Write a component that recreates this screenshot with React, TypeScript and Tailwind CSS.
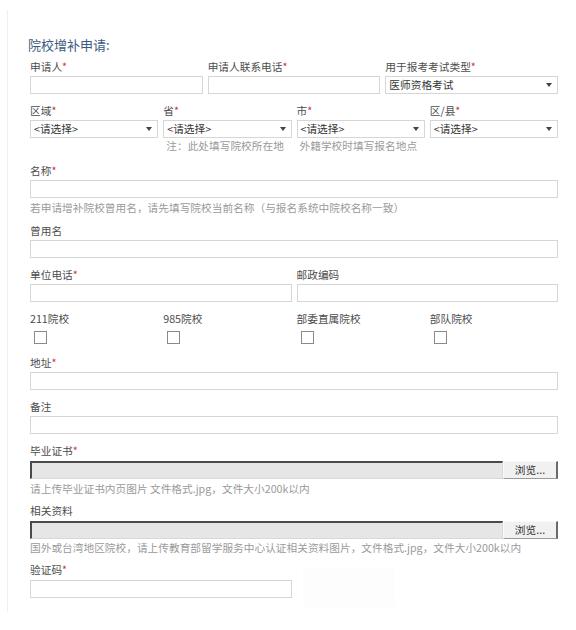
import React from "react";

const font = {
  fontFamily: '"Microsoft YaHei", "Noto Sans CJK SC", "Noto Sans", sans-serif',
};

function Label({ text, req }: { text: string; req?: boolean }) {
  return (
    <div className="h-[14px] leading-[14px] text-[10.7px] text-[#4d4d4d] whitespace-nowrap">
      {text}
      {req && <span className="text-[#d0342c]">*</span>}
    </div>
  );
}

function TextBox({ className = "" }: { className?: string }) {
  return (
    <div className={`h-[18px] border border-[#d6d6d6] bg-white ${className}`} />
  );
}

function SelectBox({ value }: { value: string }) {
  return (
    <div className="mt-[2px] h-[18px] border border-[#d6d6d6] bg-white flex items-center justify-between pl-[3px] pr-[5px]">
      <span className="text-[10.7px] leading-[14px] text-[#333]">{value}</span>
      <span className="w-0 h-0 border-l-[3.5px] border-r-[3.5px] border-t-[4px] border-l-transparent border-r-transparent border-t-[#444]" />
    </div>
  );
}

function Hint({ text, className = "" }: { text: string; className?: string }) {
  return (
    <div
      className={`h-[14px] leading-[14px] text-[10.7px] text-[#9a9a9a] whitespace-nowrap ${className}`}
    >
      {text}
    </div>
  );
}

function FileBox() {
  return (
    <div className="mt-[3px] h-[18px] flex">
      <div className="flex-1 bg-[#e6e6e6] border-t-2 border-l-2 border-t-[#4a4a4a] border-l-[#4a4a4a] border-b border-r border-b-[#d8d8d8] border-r-[#d8d8d8]" />
      <div className="w-[55px] bg-[#f1f1f1] border-t border-l border-t-[#fafafa] border-l-[#fafafa] border-r-2 border-b border-r-[#6a6a6a] border-b-[#9a9a9a] flex items-center justify-center text-[10.7px] leading-[14px] text-[#333]">
        浏览...
      </div>
    </div>
  );
}

function Check({ text }: { text: string }) {
  return (
    <div>
      <Label text={text} />
      <div className="mt-[5px] ml-[4px] w-[13px] h-[13px] border border-[#8a8a8a] bg-white" />
    </div>
  );
}

export default function App() {
  return (
    <div className="w-[576px] h-[630px] bg-white" style={font}>
      <div className="pt-[10px] pl-[7px]">
        <div className="h-[602px] border-l border-[#efefef] pl-[22px] pr-[18px] pt-[27px]">
          {/* Title */}
          <div className="ml-[-2px] h-[16px] leading-[16px] text-[13px] text-[#3b5a82]">
            院校增补申请:
          </div>

          {/* Applicant row */}
          <div className="mt-[7px] grid grid-cols-3 gap-x-[5px]">
            <div>
              <Label text="申请人" req />
              <TextBox className="mt-[2px]" />
            </div>
            <div>
              <Label text="申请人联系电话" req />
              <TextBox className="mt-[2px]" />
            </div>
            <div>
              <Label text="用于报考考试类型" req />
              <SelectBox value="医师资格考试" />
            </div>
          </div>

          {/* Region row */}
          <div className="mt-[10px] grid grid-cols-4 gap-x-[5px]">
            <div>
              <Label text="区域" req />
              <SelectBox value="<请选择>" />
            </div>
            <div>
              <Label text="省" req />
              <SelectBox value="<请选择>" />
            </div>
            <div>
              <Label text="市" req />
              <SelectBox value="<请选择>" />
            </div>
            <div>
              <Label text="区/县" req />
              <SelectBox value="<请选择>" />
            </div>
            <div />
            <Hint text="注：此处填写院校所在地" className="mt-[1px] pl-[3px]" />
            <Hint text="外籍学校时填写报名地点" className="mt-[1px] pl-[3px]" />
            <div />
          </div>

          {/* Name */}
          <div className="mt-[11px]">
            <Label text="名称" req />
            <TextBox className="mt-[2px]" />
            <Hint
              text="若申请增补院校曾用名，请先填写院校当前名称（与报名系统中院校名称一致）"
              className="mt-[3px]"
            />
          </div>

          <div className="mt-[9px]">
            <Label text="曾用名" />
            <TextBox className="mt-[2px]" />
          </div>

          <div className="mt-[10px] grid grid-cols-2 gap-x-[5px]">
            <div>
              <Label text="单位电话" req />
              <TextBox className="mt-[2px]" />
            </div>
            <div>
              <Label text="邮政编码" />
              <TextBox className="mt-[2px]" />
            </div>
          </div>

          {/* Checkboxes */}
          <div className="mt-[10px] grid grid-cols-4 gap-x-[5px]">
            <Check text="211院校" />
            <Check text="985院校" />
            <Check text="部委直属院校" />
            <Check text="部队院校" />
          </div>

          <div className="mt-[12px]">
            <Label text="地址" req />
            <TextBox className="mt-[2px]" />
          </div>

          <div className="mt-[10px]">
            <Label text="备注" />
            <TextBox className="mt-[2px]" />
          </div>

          {/* Uploads */}
          <div className="mt-[10px]">
            <Label text="毕业证书" req />
            <FileBox />
            <Hint text="请上传毕业证书内页图片 文件格式.jpg，文件大小200k以内" className="mt-[3px]" />
          </div>

          <div className="mt-[8px]">
            <Label text="相关资料" />
            <FileBox />
            <Hint
              text="国外或台湾地区院校，请上传教育部留学服务中心认证相关资料图片，文件格式.jpg，文件大小200k以内"
              className="mt-[2px]"
            />
          </div>

          {/* Captcha */}
          <div className="mt-[8px] flex items-start">
            <div className="w-[262px]">
              <Label text="验证码" req />
              <TextBox className="mt-[3px]" />
            </div>
            <div className="ml-[11px] mt-[5px] w-[92px] h-[39px] bg-[#fdfdfd]" />
          </div>
        </div>
      </div>
    </div>
  );
}
